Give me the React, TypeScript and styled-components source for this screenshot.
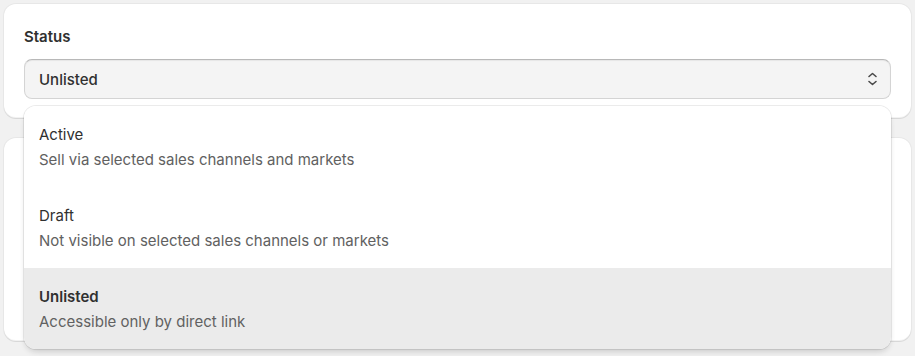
import React from "react";
import styled, { createGlobalStyle } from "styled-components";

const Global = createGlobalStyle`
  html, body {
    margin: 0;
    padding: 0;
    background: #f1f1f1;
    font-family: Inter, "Noto Sans", sans-serif;
    color: #303030;
  }
`;

const Page = styled.div`
  position: relative;
  display: flex;
  flex-direction: column;
  gap: 20px;
  padding: 4px;
  width: 915px;
  height: 356px;
  box-sizing: border-box;
`;

const Card = styled.div<{ $height: number }>`
  background: #fff;
  border-radius: 12px;
  height: ${(p) => p.$height}px;
  box-sizing: border-box;
  padding: 20px 20px;
  box-shadow: 0 1px 0 0 rgba(26, 26, 26, 0.07), 0 0 0 1px rgba(0, 0, 0, 0.04),
    inset 0 -1px 0 0 rgba(0, 0, 0, 0.05);
`;

const Label = styled.div`
  font-size: 15px;
  font-weight: 600;
  line-height: 22px;
  margin-top: 2px;
  margin-bottom: 11px;
`;

const SelectBox = styled.div`
  display: flex;
  align-items: center;
  justify-content: space-between;
  height: 40px;
  box-sizing: border-box;
  padding: 0 8px 0 14px;
  border-radius: 8px;
  background: #f4f4f4;
  border: 1px solid #d4d4d4;
  border-top-color: #b8b8b8;
  box-shadow: inset 0 1px 1px rgba(0, 0, 0, 0.06);
  font-size: 15px;
  font-weight: 500;
`;

const Menu = styled.div`
  position: absolute;
  left: 24px;
  top: 106px;
  width: 867px;
  background: #fff;
  border-radius: 12px;
  overflow: hidden;
  box-shadow: 0 4px 6px -2px rgba(26, 26, 26, 0.2), 0 0 0 1px rgba(0, 0, 0, 0.08);
`;

const Option = styled.div<{ $selected?: boolean }>`
  display: flex;
  flex-direction: column;
  gap: 3px;
  padding: 18px 15px 16px;
  background: ${(p) => (p.$selected ? "#ebebeb" : "#fff")};
`;

const OptionTitle = styled.div<{ $selected?: boolean }>`
  font-size: 15px;
  line-height: 22px;
  font-weight: ${(p) => (p.$selected ? 600 : 400)};
  color: #303030;
`;

const OptionDesc = styled.div`
  font-size: 15px;
  line-height: 22px;
  color: #616161;
`;

function SelectIcon() {
  return (
    <svg width="20" height="20" viewBox="0 0 20 20" fill="none">
      <path
        d="M7 7.5 10.5 4.5l3.5 3M7 12.5l3.5 3 3.5-3"
        stroke="#4a4a4a"
        strokeWidth="1.6"
        strokeLinecap="round"
        strokeLinejoin="round"
      />
    </svg>
  );
}

const options = [
  { title: "Active", desc: "Sell via selected sales channels and markets" },
  { title: "Draft", desc: "Not visible on selected sales channels or markets" },
  { title: "Unlisted", desc: "Accessible only by direct link", selected: true },
];

export default function App() {
  return (
    <>
      <Global />
      <Page>
        <Card $height={114}>
          <Label>Status</Label>
          <SelectBox>
            <span>Unlisted</span>
            <SelectIcon />
          </SelectBox>
        </Card>
        <Card $height={203} />
        <Menu>
          {options.map((o) => (
            <Option key={o.title} $selected={o.selected}>
              <OptionTitle $selected={o.selected}>{o.title}</OptionTitle>
              <OptionDesc>{o.desc}</OptionDesc>
            </Option>
          ))}
        </Menu>
      </Page>
    </>
  );
}
